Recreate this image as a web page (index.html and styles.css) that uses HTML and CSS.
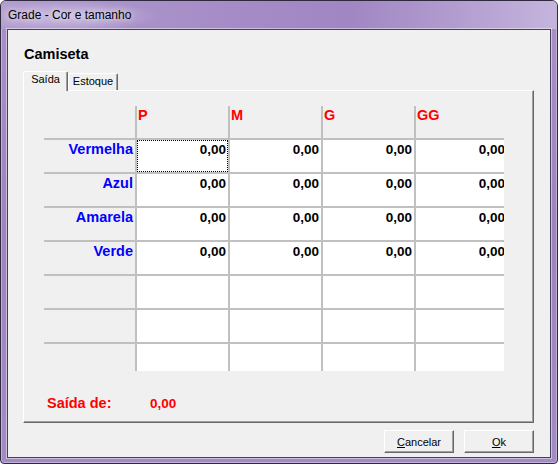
FILE: index.html
```html
<!DOCTYPE html>
<html>
<head>
<meta charset="utf-8">
<link rel="stylesheet" href="styles.css">
</head>
<body>
<div class="window">
  <div class="titlebar"><span class="title">Grade - Cor e tamanho</span></div>
  <div class="client">
    <div class="product">Camiseta</div>
    <div class="tabs">
      <div class="tab tab-active">Saída</div>
      <div class="tab tab-estoque">Estoque</div>
    </div>
    <div class="panel">
      <div class="grid-clip">
        <div class="grid">
          <div class="c fx"></div>
          <div class="c fx hd">P</div>
          <div class="c fx hd">M</div>
          <div class="c fx hd">G</div>
          <div class="c fx hd">GG</div>

          <div class="c fx lbl">Vermelha</div>
          <div class="c num focus">0,00</div>
          <div class="c num">0,00</div>
          <div class="c num">0,00</div>
          <div class="c num">0,00</div>

          <div class="c fx lbl">Azul</div>
          <div class="c num">0,00</div>
          <div class="c num">0,00</div>
          <div class="c num">0,00</div>
          <div class="c num">0,00</div>

          <div class="c fx lbl">Amarela</div>
          <div class="c num">0,00</div>
          <div class="c num">0,00</div>
          <div class="c num">0,00</div>
          <div class="c num">0,00</div>

          <div class="c fx lbl">Verde</div>
          <div class="c num">0,00</div>
          <div class="c num">0,00</div>
          <div class="c num">0,00</div>
          <div class="c num">0,00</div>

          <div class="c fx"></div>
          <div class="c"></div>
          <div class="c"></div>
          <div class="c"></div>
          <div class="c"></div>

          <div class="c fx"></div>
          <div class="c"></div>
          <div class="c"></div>
          <div class="c"></div>
          <div class="c"></div>

          <div class="c fx"></div>
          <div class="c"></div>
          <div class="c"></div>
          <div class="c"></div>
          <div class="c"></div>
        </div>
      </div>
      <div class="summary"><span class="summary-label">Saída de:</span><span class="summary-value">0,00</span></div>
    </div>
    <div class="buttons">
      <button class="btn"><u>C</u>ancelar</button>
      <button class="btn"><u>O</u>k</button>
    </div>
  </div>
</div>
</body>
</html>
```

FILE: styles.css
```css
* {
  box-sizing: border-box;
}

html, body {
  margin: 0;
  padding: 0;
  background: #ffffff;
}

body {
  width: 558px;
  height: 464px;
  overflow: hidden;
  font-family: "Liberation Sans", Arial, sans-serif;
}

.window {
  width: 558px;
  height: 464px;
  border: 1px solid #2f2940;
  border-radius: 6px 6px 4px 4px;
  background: linear-gradient(to bottom, #a990c9 0%, #9d84bf 50%, #a38bc5 100%);
  box-shadow: inset 0 0 0 1px rgba(255, 255, 255, 0.35);
  display: flex;
  flex-direction: column;
  overflow: hidden;
}

.titlebar {
  height: 28px;
  flex: none;
  display: flex;
  align-items: center;
  padding-left: 7px;
  background:
    radial-gradient(ellipse 90px 15px at 68px 15px, rgba(225, 215, 240, 0.6), rgba(225, 215, 240, 0) 100%),
    linear-gradient(to right, #b39ed0 0%, #a992c9 22%, #a58bc6 45%, #a086c2 62%, #b09ace 80%, #c5b5dd 100%);
}

.title {
  font-size: 12px;
  line-height: 14px;
  color: #000;
  text-shadow: 0 0 6px rgba(255, 255, 255, 0.7), 0 0 10px rgba(255, 255, 255, 0.4);
}

.client {
  flex: none;
  margin: 0 6px 5px 6px;
  height: 429px;
  border: 1px solid #463f58;
  box-shadow: 0 0 0 1px rgba(255, 255, 255, 0.45);
  background: #f0f0f0;
  padding: 16px 16px 0 15px;
}

.product {
  font-weight: bold;
  font-size: 14.5px;
  line-height: 17px;
  height: 17px;
  padding-left: 1px;
  color: #000;
}

.tabs {
  display: flex;
  align-items: flex-end;
  margin-top: 8px;
  height: 19px;
}

.tab {
  font-size: 11px;
  line-height: 13px;
  text-align: center;
  color: #000;
  background: #f0f0f0;
  border-top: 1px solid #ffffff;
  border-left: 1px solid #ffffff;
  border-right: 1px solid #696969;
  box-shadow: inset -1px 0 0 #a0a0a0;
  padding-top: 1px;
  border-radius: 2px 2px 0 0;
}

.tab-active {
  width: 45px;
  height: 20px;
  margin-bottom: -1px;
  position: relative;
  z-index: 1;
}

.tab-estoque {
  width: 50px;
  height: 17px;
}

.panel {
  height: 333px;
  border-top: 1px solid #ffffff;
  border-left: 1px solid #ffffff;
  border-right: 1px solid #696969;
  border-bottom: 1px solid #696969;
  box-shadow: inset -1px -1px 0 #a0a0a0;
  padding: 15px 0 0 20px;
}

.grid-clip {
  width: 460px;
  height: 265px;
  overflow: hidden;
}

.grid {
  display: grid;
  grid-template-columns: repeat(5, 91px);
  grid-auto-rows: 32px;
  gap: 2px;
  background: #c0c0c0;
  width: 463px;
}

.c {
  background: #ffffff;
  padding: 1px 2px 0 1px;
  line-height: 17px;
  font-weight: bold;
  white-space: nowrap;
  overflow: hidden;
}

.fx {
  background: #f0f0f0;
}

.hd {
  color: #ff0000;
  font-size: 14.5px;
}

.lbl {
  color: #0000ff;
  font-size: 14.5px;
  text-align: right;
}

.num {
  color: #000000;
  font-size: 13.5px;
  text-align: right;
}

.focus {
  outline: 1px dotted #000000;
  outline-offset: -1px;
}

.summary {
  margin-top: 23px;
  margin-left: 3px;
  line-height: 17px;
  font-weight: bold;
  color: #ff0000;
}

.summary-label {
  display: inline-block;
  width: 103px;
  font-size: 14.5px;
}

.summary-value {
  font-size: 13.5px;
}

.buttons {
  display: flex;
  justify-content: flex-end;
  gap: 10px;
  margin-top: 7px;
}

.btn {
  width: 70px;
  height: 23px;
  padding: 0;
  font-family: "Liberation Sans", Arial, sans-serif;
  font-size: 11px;
  color: #000000;
  background: #f0f0f0;
  border: 1px solid;
  border-color: #ffffff #696969 #696969 #ffffff;
  box-shadow: inset -1px -1px 0 #a0a0a0;
  border-radius: 0;
}
```
